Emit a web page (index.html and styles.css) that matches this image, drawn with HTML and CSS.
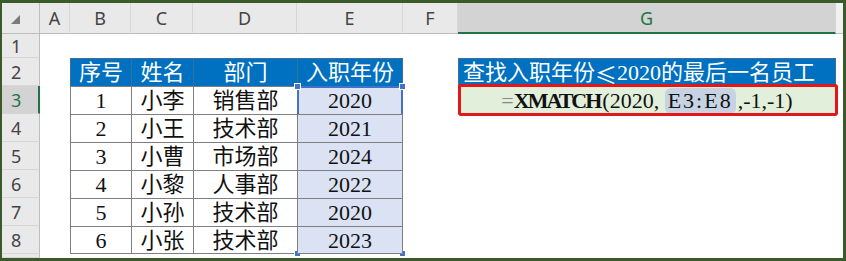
FILE: index.html
```html
<!DOCTYPE html>
<html lang="zh-CN">
<head>
    <meta charset="UTF-8">
    <title>XMATCH</title>
    <link rel="stylesheet" href="styles.css">
</head>
<body>
<div class="frame">
    <div class="sheet">
        <!-- 列标 -->
        <div class="corner"><svg width="9" height="9" viewBox="0 0 9 9"><path d="M9 0V9H0Z" fill="#7b7b7b"/></svg></div>
        <div class="col">A</div>
        <div class="col">B</div>
        <div class="col">C</div>
        <div class="col">D</div>
        <div class="col">E</div>
        <div class="col">F</div>
        <div class="col on">G</div>
        <div class="col rest"></div>

        <!-- 第1行 -->
        <div class="rh">1</div>
        <div></div><div></div><div></div><div></div><div></div><div></div><div></div><div></div>

        <!-- 第2行 表头 -->
        <div class="rh">2</div>
        <div></div>
        <div class="c t h">序号</div>
        <div class="c t h">姓名</div>
        <div class="c t h">部门</div>
        <div class="c t h r">入职年份</div>
        <div></div>
        <div class="c t h r title">查找入职年份<span class="cjk">≤</span>2020的最后一名员工</div>
        <div></div>

        <div class="rh on">3</div>
        <div></div>
        <div class="c t">1</div>
        <div class="c t">小李</div>
        <div class="c t">销售部</div>
        <div class="c t r y">2020
            <div class="range"><i class="tl"></i><i class="tr"></i><i class="bl"></i><i class="br"></i></div>
        </div>
        <div></div>
        <div class="c t r b formula">
            <span class="eq">=</span><b>XMATCH</b>(2020,&nbsp;<span class="ref">E3:E8</span>,-1,-1)
            <div class="mark"></div>
        </div>
        <div></div>

        <div class="rh">4</div>
        <div></div>
        <div class="c t">2</div>
        <div class="c t">小王</div>
        <div class="c t">技术部</div>
        <div class="c t r y">2021</div>
        <div></div><div></div><div></div>

        <div class="rh">5</div>
        <div></div>
        <div class="c t">3</div>
        <div class="c t">小曹</div>
        <div class="c t">市场部</div>
        <div class="c t r y">2024</div>
        <div></div><div></div><div></div>

        <div class="rh">6</div>
        <div></div>
        <div class="c t">4</div>
        <div class="c t">小黎</div>
        <div class="c t">人事部</div>
        <div class="c t r y">2022</div>
        <div></div><div></div><div></div>

        <div class="rh">7</div>
        <div></div>
        <div class="c t">5</div>
        <div class="c t">小孙</div>
        <div class="c t">技术部</div>
        <div class="c t r y">2020</div>
        <div></div><div></div><div></div>

        <div class="rh">8</div>
        <div></div>
        <div class="c t b">6</div>
        <div class="c t b">小张</div>
        <div class="c t b">技术部</div>
        <div class="c t r b y">2023</div>
        <div></div><div></div><div></div>

        <!-- 第9行只露出一点 -->
        <div class="rh"></div>
        <div></div><div></div><div></div><div></div><div></div><div></div><div></div><div></div>
    </div>
</div>
</body>
</html>
```

FILE: styles.css
```css
body {
    margin: 0;
    background: #fff;
}

.frame {
    width: 846px;
    height: 261px;
    box-sizing: border-box;
    padding: 3px 3px 3px 2px;
    background: #3a5a2a;
}

.sheet {
    display: grid;
    grid-template-columns: 38px 30px 61px 62px 104px 106px 55px 378px 7px;
    grid-template-rows: 31px 24px repeat(7, 28px) 4px;
    height: 100%;
    overflow: hidden;
    background: #fff;
    font-family: "Liberation Serif", "Noto Sans CJK SC", serif;
    font-size: 22px;
    color: #111;
}

.sheet > div {
    box-sizing: border-box;
}

/* 行列标题 */
.corner {
    display: flex;
    align-items: flex-end;
    padding: 0 0 9px 9px;
    background: #e9e9e9;
    border-right: 1px solid #bdbdbd;
    border-bottom: 1px solid #bdbdbd;
}

.col {
    display: flex;
    align-items: center;
    justify-content: center;
    background: #e9e9e9;
    border-right: 1px solid #d6d6d6;
    border-bottom: 1px solid #bdbdbd;
    font-family: "Noto Sans", sans-serif;
    font-size: 18px;
    color: #444;
}

.col.on {
    background: #d3d3d3;
    color: #217346;
    border-bottom: 2px solid #217346;
}

.col.rest {
    background: #f1f1f1;
    border-right: none;
}

.rh {
    display: flex;
    align-items: center;
    padding-left: 9px;
    background: #e9e9e9;
    border-right: 1px solid #bdbdbd;
    border-bottom: 1px solid #d6d6d6;
    font-family: "Noto Sans", sans-serif;
    font-size: 18px;
    color: #444;
}

.rh.on {
    background: #d3d3d3;
    color: #217346;
    border-right: 2px solid #217346;
}

/* 单元格 */
.c {
    display: flex;
    align-items: center;
    justify-content: center;
    padding-top: 2px;
    line-height: 1.2;
    white-space: nowrap;
}

.t {
    border-left: 1px solid #7f7f7f;
    border-top: 1px solid #7f7f7f;
}

.t.r {
    border-right: 1px solid #7f7f7f;
}

.t.b {
    border-bottom: 1px solid #7f7f7f;
}

.h {
    background: #0070c0;
    color: #fff;
    border-color: #3c6e9e !important;
}

.title {
    justify-content: flex-start;
    padding-left: 4px;
}

.cjk {
    font-family: "Noto Sans CJK SC", sans-serif;
}

.y {
    position: relative;
    background: #dae2f3;
}

/* 选区 E3:E8 */
.range {
    position: absolute;
    left: -1px;
    top: -1px;
    width: 106px;
    height: 168px;
    box-sizing: border-box;
    border: 2px solid #4472c4;
}

.range i {
    position: absolute;
    width: 5px;
    height: 5px;
    background: #4472c4;
    border: 1px solid #fff;
}

.range .tl { left: -5px; top: -5px; }
.range .tr { right: -5px; top: -5px; }
.range .bl { left: -5px; bottom: -5px; }
.range .br { right: -5px; bottom: -5px; }

/* 公式单元格 */
.formula {
    position: relative;
    background: #e2efda;
}

.eq {
    color: #888;
}

.formula b {
    letter-spacing: -2px;
    margin-right: 2px;
}

.ref {
    padding: 0 3px;
    margin-right: 2px;
    border-radius: 6px;
    letter-spacing: 2px;
    background: #c7d3e2;
}

.mark {
    position: absolute;
    left: -1px;
    top: -3px;
    right: -3px;
    bottom: -3px;
    border: 3px solid #e3161c;
    border-radius: 3px;
}
```
